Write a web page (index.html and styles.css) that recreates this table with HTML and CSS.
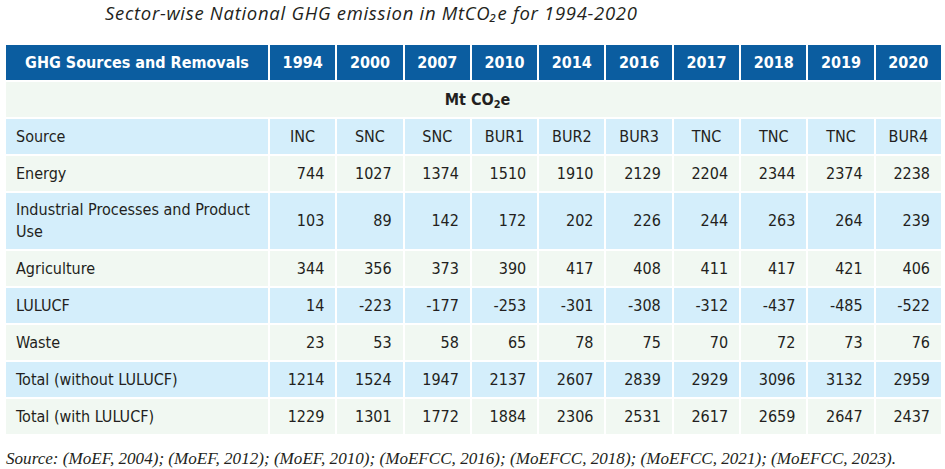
FILE: index.html
```html
<!DOCTYPE html>
<html lang="en">
<head>
<meta charset="utf-8">
<title>Sector-wise National GHG emission</title>
<link rel="stylesheet" href="styles.css">
</head>
<body>
<div class="page">
  <h1 class="title">Sector-wise National GHG emission in MtCO₂e for 1994-2020</h1>
  <table class="ghg">
    <colgroup>
      <col class="c-name">
      <col span="10">
    </colgroup>
    <thead>
      <tr class="head">
        <th>GHG Sources and Removals</th>
        <th>1994</th><th>2000</th><th>2007</th><th>2010</th><th>2014</th>
        <th>2016</th><th>2017</th><th>2018</th><th>2019</th><th>2020</th>
      </tr>
    </thead>
    <tbody>
      <tr class="green unit"><td colspan="11">Mt CO<sub>2</sub>e</td></tr>
      <tr class="blue codes">
        <td>Source</td>
        <td>INC</td><td>SNC</td><td>SNC</td><td>BUR1</td><td>BUR2</td>
        <td>BUR3</td><td>TNC</td><td>TNC</td><td>TNC</td><td>BUR4</td>
      </tr>
      <tr class="green">
        <td>Energy</td>
        <td>744</td><td>1027</td><td>1374</td><td>1510</td><td>1910</td>
        <td>2129</td><td>2204</td><td>2344</td><td>2374</td><td>2238</td>
      </tr>
      <tr class="blue tall">
        <td>Industrial Processes and Product Use</td>
        <td>103</td><td>89</td><td>142</td><td>172</td><td>202</td>
        <td>226</td><td>244</td><td>263</td><td>264</td><td>239</td>
      </tr>
      <tr class="green">
        <td>Agriculture</td>
        <td>344</td><td>356</td><td>373</td><td>390</td><td>417</td>
        <td>408</td><td>411</td><td>417</td><td>421</td><td>406</td>
      </tr>
      <tr class="blue">
        <td>LULUCF</td>
        <td>14</td><td>-223</td><td>-177</td><td>-253</td><td>-301</td>
        <td>-308</td><td>-312</td><td>-437</td><td>-485</td><td>-522</td>
      </tr>
      <tr class="green">
        <td>Waste</td>
        <td>23</td><td>53</td><td>58</td><td>65</td><td>78</td>
        <td>75</td><td>70</td><td>72</td><td>73</td><td>76</td>
      </tr>
      <tr class="blue">
        <td>Total (without LULUCF)</td>
        <td>1214</td><td>1524</td><td>1947</td><td>2137</td><td>2607</td>
        <td>2839</td><td>2929</td><td>3096</td><td>3132</td><td>2959</td>
      </tr>
      <tr class="green">
        <td>Total (with LULUCF)</td>
        <td>1229</td><td>1301</td><td>1772</td><td>1884</td><td>2306</td>
        <td>2531</td><td>2617</td><td>2659</td><td>2647</td><td>2437</td>
      </tr>
    </tbody>
  </table>
  <p class="source">Source: (MoEF, 2004); (MoEF, 2012); (MoEF, 2010); (MoEFCC, 2016); (MoEFCC, 2018); (MoEFCC, 2021); (MoEFCC, 2023).</p>
</div>
</body>
</html>
```

FILE: styles.css
```css
html, body {
  margin: 0;
  padding: 0;
  background: #ffffff;
}

.page {
  width: 945px;
  padding-top: 1px;
}

.title {
  margin: 0 0 0 105px;
  height: 42px;
  font-family: "Open Sans", "Noto Sans", sans-serif;
  font-style: italic;
  font-weight: 500;
  font-size: 18.5px;
  line-height: 24px;
  color: #231f20;
  letter-spacing: 0.7px;
  white-space: nowrap;
}

.ghg {
  margin-left: 4px;
  width: 939px;
  table-layout: fixed;
  border-collapse: separate;
  border-spacing: 2px;
  font-family: "DejaVu Sans Condensed", "Roboto", sans-serif;
  font-size: 16px;
  color: #231f20;
}

.c-name {
  width: 262px;
}

.ghg th,
.ghg td {
  height: 35px;
  padding: 0 11px 0 10px;
  box-sizing: border-box;
  text-align: right;
  vertical-align: middle;
  line-height: 22px;
}

.head th {
  background: #0b5da0;
  color: #ffffff;
  font-weight: bold;
  text-align: center;
  padding: 0;
}

.green td {
  background: #f1f8f2;
}

.blue td {
  background: #d4eefb;
}

.ghg td:first-child {
  text-align: left;
  padding-right: 2px;
}

.unit td {
  text-align: center !important;
  font-weight: bold;
}

.unit sub {
  font-size: 11px;
  vertical-align: -3px;
  line-height: 0;
}

.codes td {
  text-align: center;
  padding: 0;
}

.codes td:first-child {
  padding-left: 10px;
}

.tall td {
  height: 56px;
}

.source {
  margin: 13px 0 0 6px;
  font-family: "Liberation Serif", serif;
  font-style: italic;
  font-size: 17.1px;
  color: #231f20;
  white-space: nowrap;
}
```
